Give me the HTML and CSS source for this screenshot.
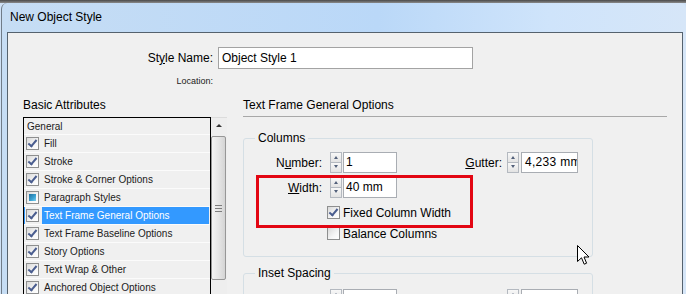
FILE: index.html
```html
<!DOCTYPE html>
<html lang="en">
<head>
    <meta charset="UTF-8">
    <title>New Object Style</title>
    <link rel="stylesheet" href="styles.css">
</head>
<body>
    <div class="top-strip"></div>

    <div class="window">
        <div class="titlebar">New Object Style</div>

        <div class="client">
            <div class="name-row">
                <label class="name-label">St<u>y</u>le Name:</label>
                <div class="name-input">Object Style 1</div>
            </div>
            <div class="location">Location:</div>

            <div class="panels">
                <!-- left: attribute list -->
                <div class="left-panel">
                    <div class="heading">Basic Attributes</div>
                    <div class="list-wrap">
                        <div class="list">
                            <div class="row head">General</div>
                            <div class="row"><span class="cb checked"></span><span class="txt">Fill</span></div>
                            <div class="row"><span class="cb checked"></span><span class="txt">Stroke</span></div>
                            <div class="row"><span class="cb checked"></span><span class="txt">Stroke &amp; Corner Options</span></div>
                            <div class="row"><span class="cb mixed"></span><span class="txt">Paragraph Styles</span></div>
                            <div class="row sel"><span class="cb checked"></span><span class="txt">Text Frame General Options</span></div>
                            <div class="row"><span class="cb checked"></span><span class="txt">Text Frame Baseline Options</span></div>
                            <div class="row"><span class="cb checked"></span><span class="txt">Story Options</span></div>
                            <div class="row"><span class="cb checked"></span><span class="txt">Text Wrap &amp; Other</span></div>
                            <div class="row"><span class="cb checked"></span><span class="txt">Anchored Object Options</span></div>
                        </div>
                        <div class="scroll">
                            <div class="scroll-up"></div>
                            <div class="thumb"><span class="grip"></span></div>
                        </div>
                    </div>
                </div>

                <!-- right: options -->
                <div class="right-panel">
                    <div class="heading ruled">Text Frame General Options</div>

                    <fieldset class="group">
                        <legend>Columns</legend>
                        <div class="spin-row first">
                            <span class="lbl">N<u>u</u>mber:</span>
                            <span class="spinner"><span class="up"></span><span class="down"></span></span>
                            <span class="field">1</span>
                            <span class="lbl wide"><u>G</u>utter:</span>
                            <span class="spinner"><span class="up"></span><span class="down"></span></span>
                            <span class="field gutter">4,233 mm</span>
                        </div>
                        <div class="spin-row">
                            <span class="lbl"><u>W</u>idth:</span>
                            <span class="spinner"><span class="up"></span><span class="down"></span></span>
                            <span class="field">40 mm</span>
                        </div>
                        <div class="check-row">
                            <span class="cb checked"></span><span>Fixed Column Width</span>
                        </div>
                        <div class="check-row">
                            <span class="cb"></span><span>Balance Columns</span>
                        </div>
                    </fieldset>

                    <fieldset class="group inset">
                        <legend>Inset Spacing</legend>
                        <div class="spin-row first">
                            <span class="lbl">Top:</span>
                            <span class="spinner"><span class="up"></span><span class="down"></span></span>
                            <span class="field">0 mm</span>
                            <span class="lbl wide">Left:</span>
                            <span class="spinner"><span class="up"></span><span class="down"></span></span>
                            <span class="field gutter">0 mm</span>
                        </div>
                    </fieldset>
                </div>
            </div>

            <div class="highlight"></div>

            <svg class="cursor" width="13" height="21" viewBox="0 0 13 21">
                <path d="M0.5 0.5 L0.5 16.5 L4.5 12.8 L7.2 19.2 L9.6 18.2 L7 12 L12 12 Z" fill="#fff" stroke="#000" stroke-width="1" stroke-linejoin="miter"/>
            </svg>
        </div>
    </div>
</body>
</html>
```

FILE: styles.css
```css
body {
    margin: 0;
    width: 686px;
    height: 294px;
    overflow: hidden;
    background: #cfe1f5;
    font-family: "Liberation Sans", Arial, sans-serif;
    font-size: 12px;
    color: #000;
}

.top-strip {
    height: 3px;
    background: linear-gradient(#4a4a4a, #8a8a8a);
}

.window {
    margin-left: 1px;
    padding: 0 3px 0 5px;
    border-left: 1px solid #707c88;
    border-radius: 6px 6px 0 0;
    background: linear-gradient(to right, #c6ddf4, #bad8f8 55%, #cfe4fb 80%, #d6e6f8);
    height: 291px;
}

.titlebar {
    height: 29px;
    line-height: 28px;
    padding-left: 3px;
    font-size: 12px;
}

.client {
    position: relative;
    height: 262px;
    border: 1px solid #55626e;
    border-bottom: none;
    background: #f0f0f0;
    overflow: hidden;
}

/* style name */
.name-row {
    display: flex;
    align-items: center;
    margin-top: 14px;
}

.name-label {
    width: 205px;
    text-align: right;
}

.name-input {
    margin-left: 5px;
    width: 255px;
    height: 22px;
    box-sizing: border-box;
    border: 1px solid #a3a3a3;
    background: #fff;
    padding-left: 3px;
    line-height: 20px;
}

.location {
    width: 205px;
    margin-top: 6px;
    text-align: right;
    font-size: 9px;
    line-height: 12px;
    color: #222;
}

.panels {
    display: flex;
    margin-top: 10px;
    margin-left: 15px;
    gap: 16px;
}

.heading {
    height: 16px;
    line-height: 16px;
}

.heading.ruled {
    padding-bottom: 3px;
    border-bottom: 1px solid #a8a8a8;
}

/* attribute list */
.left-panel {
    width: 204px;
}

.list-wrap {
    display: flex;
    margin-top: 4px;
}

.list {
    width: 189px;
    height: 200px;
    box-sizing: border-box;
    border: 1px solid #000;
    border-bottom: none;
    font-size: 10px;
    color: #1b1b1b;
}

.row {
    display: flex;
    align-items: center;
    height: 17px;
    border-bottom: 1px solid #fbfbfb;
    padding-left: 2px;
}

.row.head {
    height: 16px;
    padding-left: 3px;
}

.row .cb {
    margin-right: 3px;
}

.row .txt {
    flex: 1;
    align-self: stretch;
    line-height: 17px;
    padding-left: 2px;
}

.row.sel {
    box-shadow: inset 1px 0 0 #3399ff;
}

.row.sel .txt {
    background: #3399ff;
    color: #fff;
    margin-right: 1px;
}

.scroll {
    width: 16px;
    height: 200px;
    background: #eeeeee;
    border-top: 1px solid #dcdcdc;
    box-sizing: border-box;
}

.scroll-up {
    position: relative;
    height: 17px;
}

.scroll-up::after {
    content: "";
    position: absolute;
    left: 5px;
    top: 6px;
    border-left: 3px solid transparent;
    border-right: 3px solid transparent;
    border-bottom: 3px solid #333;
}

.thumb {
    display: flex;
    align-items: center;
    justify-content: center;
    margin: 1px 1px 0 0;
    height: 142px;
    border: 1px solid #979797;
    border-radius: 2px;
    background: linear-gradient(to right, #f4f4f4, #e6e6e6 50%, #d4d4d4);
}

.grip {
    width: 7px;
    height: 5px;
    border-top: 1px solid #7d7d7d;
    border-bottom: 1px solid #7d7d7d;
    background: linear-gradient(transparent 2px, #7d7d7d 2px, #7d7d7d 3px, transparent 3px);
}

/* checkboxes */
.cb {
    position: relative;
    flex: none;
    width: 13px;
    height: 13px;
    box-sizing: border-box;
    border: 1px solid #8e8f8f;
    background: linear-gradient(135deg, #d9d9d9, #f6f6f6 60%, #fff);
}

.cb.checked::after {
    content: "";
    position: absolute;
    left: 3px;
    top: 0px;
    width: 3px;
    height: 7px;
    border-right: 2px solid #4a5d8f;
    border-bottom: 2px solid #4a5d8f;
    transform: rotate(40deg);
}

.cb.mixed::after {
    content: "";
    position: absolute;
    left: 2px;
    top: 2px;
    width: 7px;
    height: 7px;
    background: linear-gradient(135deg, #1f6f9e, #3ba3d3 60%, #7fd0ee);
}

/* option groups */
.right-panel {
    width: 424px;
}

.group {
    width: 350px;
    box-sizing: border-box;
    margin: 13px 0 0 0;
    padding: 0 0 12px 0;
    border: 1px solid #d5dfe5;
    border-radius: 3px;
}

.group legend {
    margin-left: 11px;
    padding: 0 3px;
    height: 16px;
    line-height: 16px;
}

.group.inset {
    margin-top: 8px;
}

.spin-row {
    display: flex;
    align-items: center;
    height: 21px;
    margin-top: 4px;
}

.spin-row.first {
    margin-top: 6px;
}

.group.inset .spin-row.first {
    margin-top: 8px;
}

.lbl {
    width: 78px;
    margin-right: 8px;
    text-align: right;
}

.lbl.wide {
    width: 105px;
    margin-right: 5px;
}

.spinner {
    display: flex;
    flex-direction: column;
    width: 12px;
    height: 21px;
}

.spinner span {
    position: relative;
    flex: 1;
    border: 1px solid #b4b9c0;
    background: linear-gradient(#f8f8f8, #e3e3e3);
}

.spinner .down {
    border-top: none;
}

.spinner span::after {
    content: "";
    position: absolute;
    left: 3px;
    top: 3px;
    border-left: 2.5px solid transparent;
    border-right: 2.5px solid transparent;
}

.spinner .up::after {
    border-bottom: 3px solid #52607a;
}

.spinner .down::after {
    top: 2px;
    border-top: 3px solid #52607a;
}

.field {
    width: 54px;
    height: 21px;
    margin-left: 1px;
    box-sizing: border-box;
    border: 1px solid #a9adb3;
    background: #fff;
    padding-left: 2px;
    line-height: 19px;
    white-space: nowrap;
    overflow: hidden;
}

.field.gutter {
    width: 57px;
    margin-left: 2px;
    padding-left: 3px;
    letter-spacing: 0.3px;
}

.check-row {
    display: flex;
    align-items: center;
    gap: 3px;
    height: 21px;
    padding-left: 83px;
}

.check-row:nth-of-type(3) {
    margin-top: 4px;
}

/* annotation drawn over the dialog */
.highlight {
    position: absolute;
    left: 248px;
    top: 142px;
    width: 217px;
    height: 53px;
    box-sizing: border-box;
    border: 3px solid #e30613;
}

.cursor {
    position: absolute;
    left: 569px;
    top: 212px;
}
```
